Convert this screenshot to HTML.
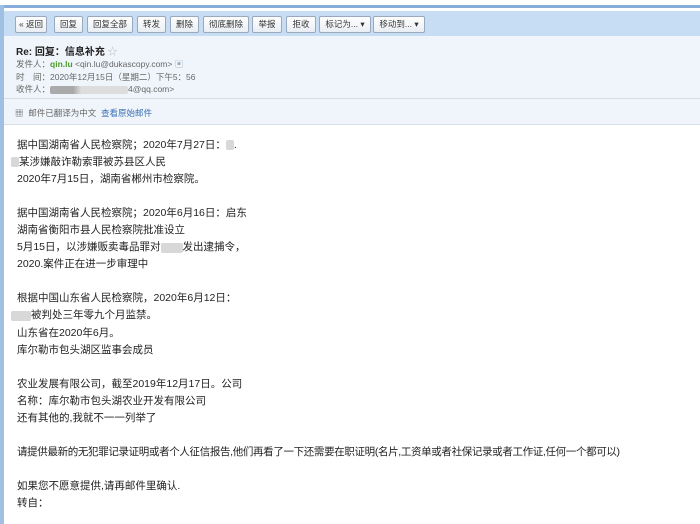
<!DOCTYPE html>
<html><head><meta charset="utf-8"><style>
body{margin:0;width:700px;height:524px;overflow:hidden;background:#fff;font-family:"Liberation Sans","Noto Sans CJK SC",sans-serif;position:relative}
.topline{position:absolute;left:0;top:5px;width:700px;height:3px;background:#86acd9}
.left{position:absolute;left:0;top:5px;width:4px;height:519px;background:#9fbfe3}
.tb{position:absolute;left:4px;top:11px;width:696px;height:25px;background:#c6ddf3}
.btn{position:absolute;top:16px;height:15px;border:1px solid #9aa9bb;background:linear-gradient(#fff,#e9eef4);font-size:8.5px;line-height:15px;text-align:center;color:#333;border-radius:2px}
.hd{position:absolute;left:4px;top:36px;width:696px;height:88px;background:#f0f5fb;border-bottom:1px solid #d8dee6}
.sep{position:absolute;left:4px;top:98px;width:696px;height:1px;background:#d6dde6}
.t{position:absolute;font-size:8.5px;color:#666;white-space:nowrap}
.body{position:absolute;left:17px;top:137px;font-size:10.5px;line-height:17.05px;color:#222;white-space:nowrap}
.blur{display:inline-block;background:#d8d8d8;height:10px;vertical-align:middle;border-radius:2px}
</style></head><body>
<div class="topline"></div><div class="left"></div>
<div class="tb"></div>
<div class="btn" style="left:15px;width:30px">« 返回</div>
<div class="btn" style="left:54px;width:27px">回复</div>
<div class="btn" style="left:87px;width:44px">回复全部</div>
<div class="btn" style="left:137px;width:27px">转发</div>
<div class="btn" style="left:170px;width:27px">删除</div>
<div class="btn" style="left:203px;width:44px">彻底删除</div>
<div class="btn" style="left:252px;width:28px">举报</div>
<div class="btn" style="left:286px;width:28px">拒收</div>
<div class="btn" style="left:319px;width:50px">标记为... ▾</div>
<div class="btn" style="left:373px;width:50px">移动到... ▾</div>
<div class="hd"></div><div class="sep"></div>
<div class="t" style="left:16px;top:43px;font-size:10px;font-weight:bold;color:#222">Re: 回复：信息补充 <span style="color:#bbb;font-weight:normal">☆</span></div>
<div class="t" style="left:16px;top:58px">发件人：<b style="color:#4c9a2a">qin.lu</b> &lt;qin.lu@dukascopy.com&gt; <span style="color:#9ab">▣</span></div>
<div class="t" style="left:16px;top:71px">时　间：2020年12月15日（星期二）下午5：56</div>
<div class="t" style="left:16px;top:83px">收件人：<span class="blur" style="width:78px;height:8px;background:linear-gradient(90deg,#aaa 30%,#ddd 40%)"></span>4@qq.com&gt;</div>
<div class="t" style="left:15px;top:107px">▦ &nbsp;邮件已翻译为中文 &nbsp;<span style="color:#3a6fb5">查看原始邮件</span></div>
<div class="body">
据中国湖南省人民检察院；2020年7月27日：<span class="blur" style="width:8px"></span>.<br>
<span class="blur" style="width:8px;margin-left:-6px"></span>某涉嫌敲诈勒索罪被苏县区人民<br>
2020年7月15日，湖南省郴州市检察院。<br><br>
据中国湖南省人民检察院；2020年6月16日：启东<br>
湖南省衡阳市县人民检察院批准设立<br>
5月15日，以涉嫌贩卖毒品罪对<span class="blur" style="width:22px"></span>发出逮捕令，<br>
2020.案件正在进一步审理中<br><br>
根据中国山东省人民检察院，2020年6月12日：<br>
<span class="blur" style="width:20px;margin-left:-6px"></span>被判处三年零九个月监禁。<br>
山东省在2020年6月。<br>
库尔勒市包头湖区监事会成员<br><br>
农业发展有限公司，截至2019年12月17日。公司<br>
名称：库尔勒市包头湖农业开发有限公司<br>
还有其他的,我就不一一列举了<br><br>
<span style="letter-spacing:-0.35px">请提供最新的无犯罪记录证明或者个人征信报告,他们再看了一下还需要在职证明(名片,工资单或者社保记录或者工作证,任何一个都可以)</span><br><br>
如果您不愿意提供,请再邮件里确认.<br>
转自：
</div>
</body></html>
